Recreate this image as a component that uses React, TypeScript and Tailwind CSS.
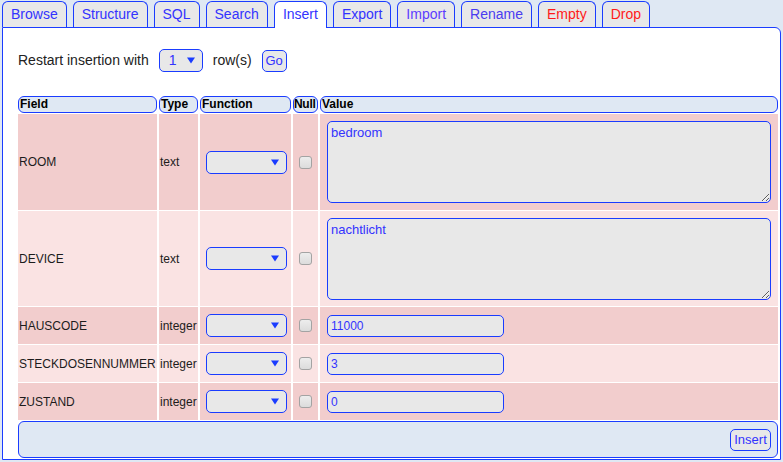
import React from 'react';

const tabs = [
  { label: 'Browse', color: 'text-[#3333ff]' },
  { label: 'Structure', color: 'text-[#3333ff]' },
  { label: 'SQL', color: 'text-[#3333ff]' },
  { label: 'Search', color: 'text-[#3333ff]' },
  { label: 'Insert', color: 'text-[#3333ff]', active: true },
  { label: 'Export', color: 'text-[#3333ff]' },
  { label: 'Import', color: 'text-[#5c3cff]' },
  { label: 'Rename', color: 'text-[#4a3cf0]' },
  { label: 'Empty', color: 'text-[#ff1a1a]' },
  { label: 'Drop', color: 'text-[#ff1a1a]' },
];

const fields = [
  { name: 'ROOM', type: 'text', value: 'bedroom', big: true },
  { name: 'DEVICE', type: 'text', value: 'nachtlicht', big: true },
  { name: 'HAUSCODE', type: 'integer', value: '11000' },
  { name: 'STECKDOSENNUMMER', type: 'integer', value: '3' },
  { name: 'ZUSTAND', type: 'integer', value: '0' },
];

function Arrow() {
  return (
    <svg width="8" height="7" viewBox="0 0 8 7" className="shrink-0">
      <path d="M0 0.5 H8 L4 6.5 Z" fill="#1a3cff" />
    </svg>
  );
}

function FakeSelect({ w, label }: { w: string; label?: string }) {
  return (
    <div
      className={`${w} h-[23px] rounded-[5px] border border-[#1a3cff] bg-[#e8e8e8] flex items-center justify-between pl-[9px] pr-[7px] text-[14px] text-[#3333ff]`}
    >
      <span>{label}</span>
      <Arrow />
    </div>
  );
}

function Checkbox() {
  return <span className="block w-[13px] h-[13px] rounded-[3px] border border-[#a3a3a3] bg-gradient-to-b from-[#ededed] to-[#dcdcdc]" />;
}

export default function App() {
  return (
    <div className="h-[462px] w-[783px] bg-[#dfe8f3] font-['Liberation_Sans',Arial,sans-serif] overflow-hidden">
      {/* tabs */}
      <div className="flex items-end gap-[6px] pl-[2px] pt-[1px]">
        {tabs.map((t) => (
          <div
            key={t.label}
            className={`border border-b-0 border-[#1a3cff] rounded-t-[6px] px-[8px] text-[14px] leading-[25px] ${t.color} ${
              t.active ? 'bg-white h-[27px] -mb-px relative z-10' : 'bg-[#e8e8e8] h-[26px]'
            }`}
          >
            {t.label}
          </div>
        ))}
      </div>

      {/* panel */}
      <div className="mx-[2px] h-[433px] border border-[#1a3cff] rounded-tr-[6px] bg-white pl-[15px] pr-[2px] pt-[20px]">
        <div className="flex items-center text-[14px] text-[#222] h-[25px]">
          <span>Restart insertion with</span>
          <div className="ml-[10px]">
            <FakeSelect w="w-[44px]" label="1" />
          </div>
          <span className="ml-[10px]">row(s)</span>
          <button className="ml-[10px] h-[22px] w-[25px] rounded-[5px] border border-[#1a3cff] bg-[#e8e8e8] text-[13px] text-[#3333ff] leading-none">
            Go
          </button>
        </div>

        <div className="mt-[23px] grid grid-cols-[139px_39px_91px_25px_1fr] gap-x-[2px] gap-y-[1px] text-[12px]">
          {['Field', 'Type', 'Function', 'Null', 'Value'].map((h) => (
            <div
              key={h}
              className={`h-[17px] rounded-[6px] border border-[#1a3cff] bg-[#dfe8f3] ${h === 'Null' ? 'px-0 tracking-[-0.3px]' : 'px-[1px]'} font-bold text-black leading-[15px] overflow-hidden whitespace-nowrap`}
            >
              {h}
            </div>
          ))}

          {fields.map((f, i) => {
            const bg = i % 2 === 0 ? 'bg-[#f2cdcd]' : 'bg-[#fae3e3]';
            const h = f.big ? (i === 0 ? 'h-[96px]' : 'h-[95px]') : 'h-[37px]';
            return (
              <React.Fragment key={f.name}>
                <div className={`${bg} ${h} flex items-center pl-[1px] text-[#1c1c1c] whitespace-nowrap`}>{f.name}</div>
                <div className={`${bg} ${h} flex items-center pl-[1px] text-[#1c1c1c]`}>{f.type}</div>
                <div className={`${bg} ${h} flex items-center pl-[6px]`}>
                  <FakeSelect w="w-[81px]" />
                </div>
                <div className={`${bg} ${h} flex items-center justify-center`}>
                  <Checkbox />
                </div>
                <div className={`${bg} ${h} flex items-center px-[7px]`}>
                  {f.big ? (
                    <textarea
                      readOnly
                      defaultValue={f.value}
                      className="block w-full h-[82px] rounded-[5px] border border-[#1a3cff] bg-[#e8e8e8] px-[3px] py-[1px] text-[13px] text-[#3333ff] outline-none font-['Liberation_Sans',Arial,sans-serif]"
                    />
                  ) : (
                    <input
                      readOnly
                      defaultValue={f.value}
                      className="block w-[177px] h-[22px] rounded-[5px] border border-[#1a3cff] bg-[#e8e8e8] px-[3px] text-[12px] text-[#3333ff] outline-none font-['Liberation_Sans',Arial,sans-serif]"
                    />
                  )}
                </div>
              </React.Fragment>
            );
          })}

          <div className="col-span-5 h-[37px] rounded-[6px] border border-[#1a3cff] bg-[#dfe8f3] flex items-center justify-end pr-[6px]">
            <button className="h-[22px] w-[41px] rounded-[5px] border border-[#1a3cff] bg-[#e8e8e8] text-[13px] text-[#3333ff] leading-none">
              Insert
            </button>
          </div>
        </div>
      </div>
    </div>
  );
}
